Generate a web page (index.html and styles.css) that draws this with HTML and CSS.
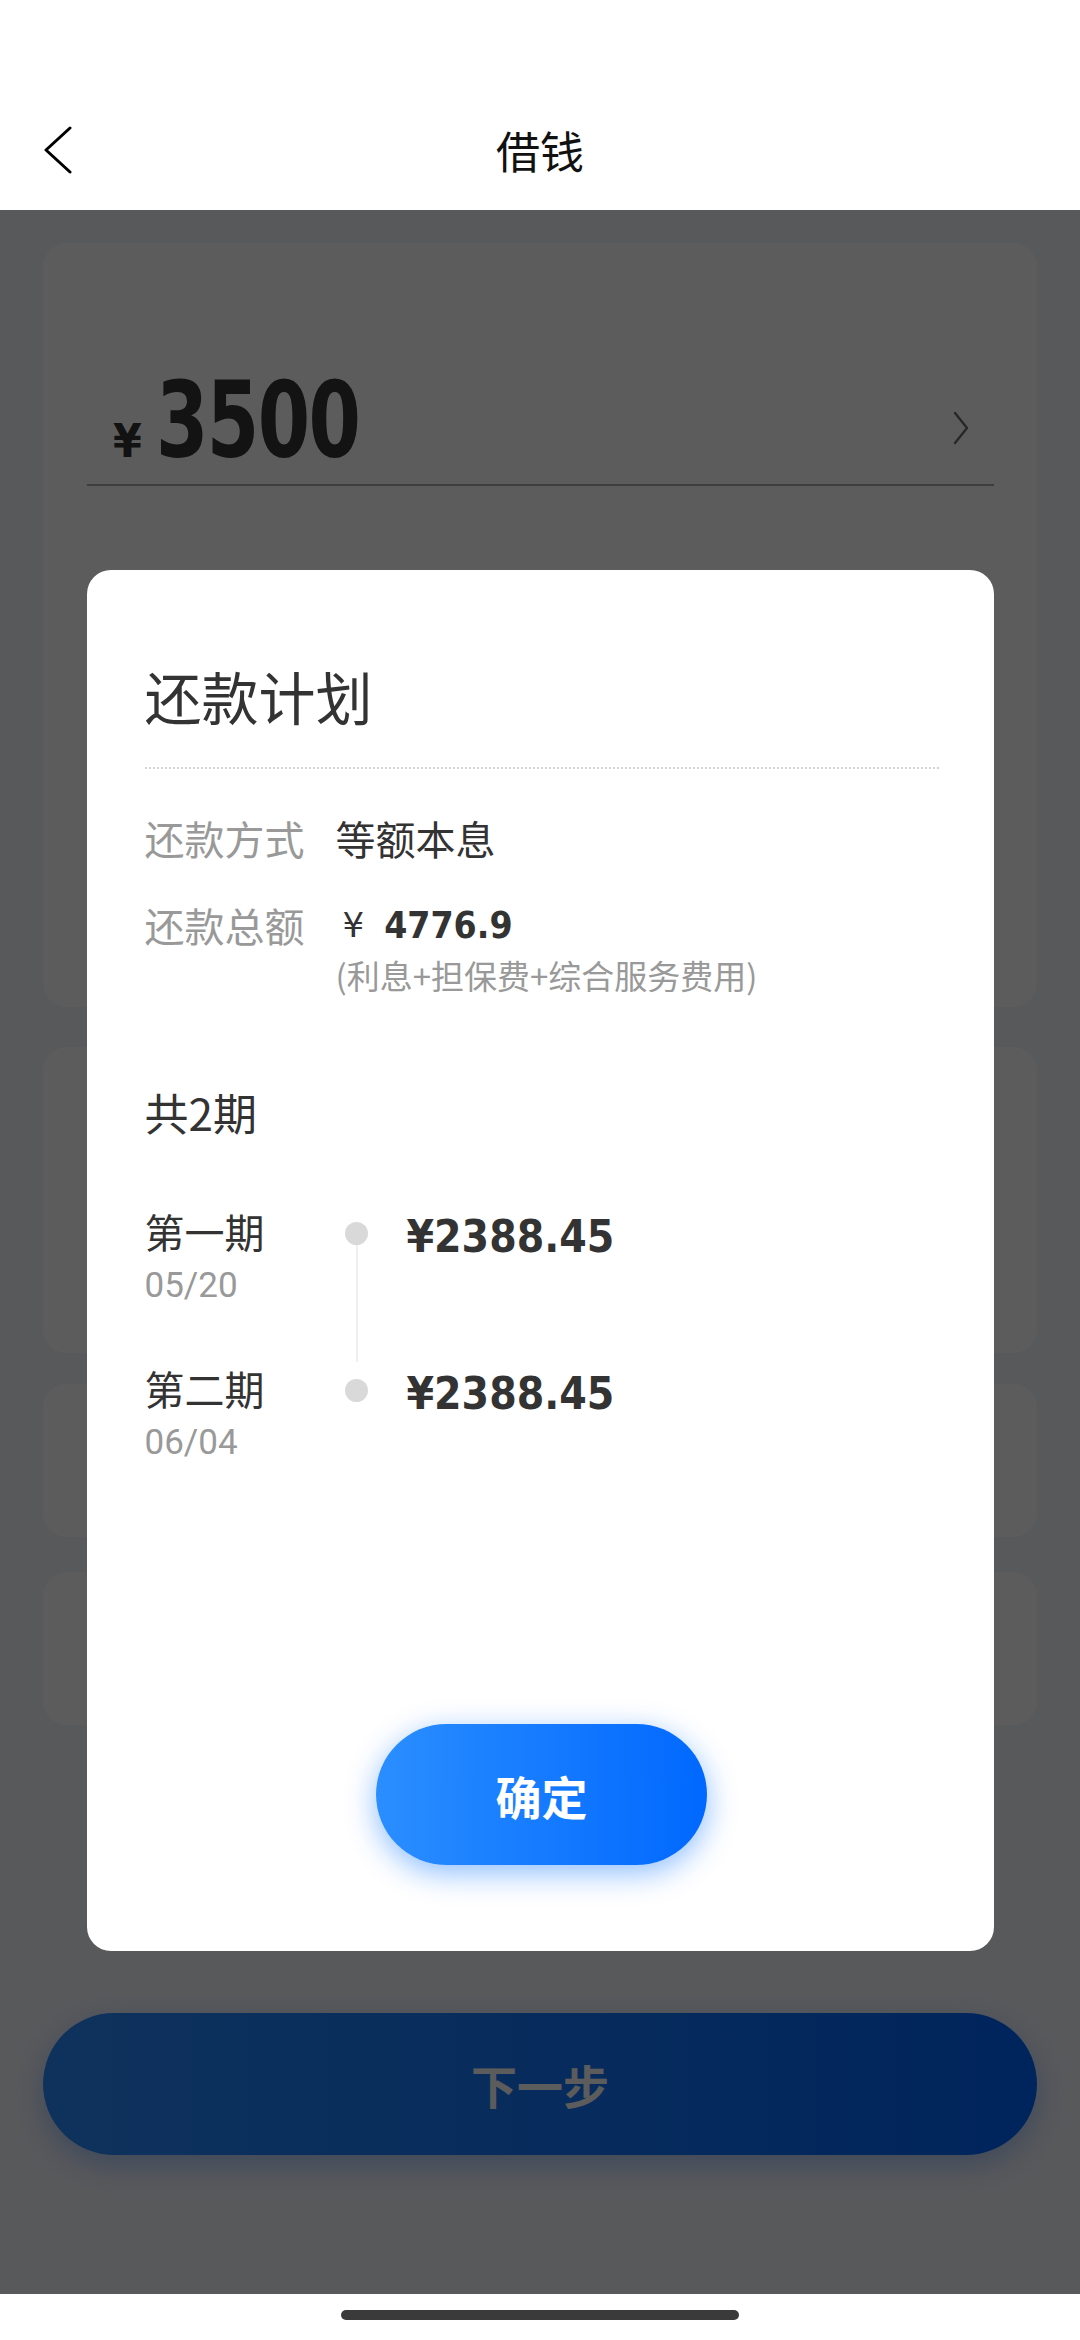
FILE: index.html
```html
<!DOCTYPE html>
<html lang="zh-CN">
<head>
<meta charset="utf-8">
<title>借钱</title>
<link rel="stylesheet" href="styles.css">
</head>
<body>
<div class="screen">
  <header class="topbar">
    <div class="status"></div>
    <div class="nav">
      <div class="nav-left">
        <svg class="back" width="30" height="50" viewBox="0 0 30 50"><path d="M26 3 L2 25 L26 47" fill="none" stroke="#000" stroke-width="3" stroke-linecap="round" stroke-linejoin="round"/></svg>
      </div>
      <div class="title">借钱</div>
      <div></div>
    </div>
  </header>
  <main class="page">
    <section class="card card-amount">
      <div class="amount-row">
        <span class="yen">¥</span><span class="amount">3500</span>
        <svg class="more" width="18" height="34" viewBox="0 0 18 34"><path d="M3 2 L15 17 L3 32" fill="none" stroke="#6f6f6f" stroke-width="2.4" stroke-linecap="round" stroke-linejoin="round"/></svg>
      </div>
    </section>
    <section class="card card-b"></section>
    <section class="card card-c"></section>
    <section class="card card-d"></section>
    <button class="next">下一步</button>

    <div class="mask">
      <div class="dialog">
        <h2 class="d-title">还款计划</h2>
        <div class="info-row first">
          <span class="label">还款方式</span>
          <span class="value">等额本息</span>
        </div>
        <div class="info-row">
          <span class="label">还款总额</span>
          <div class="value-col">
            <div class="total"><span class="t-yen">¥</span><span class="t-num">4776.9</span></div>
            <div class="sub">(利息+担保费+综合服务费用)</div>
          </div>
        </div>
        <div class="count">共2期</div>
        <div class="periods">
          <div class="period">
            <div class="p-left">
              <div class="p-name">第一期</div>
              <div class="p-date">05/20</div>
            </div>
            <div class="p-track"><span class="dot"></span><span class="line"></span></div>
            <div class="p-amt">¥2388.45</div>
          </div>
          <div class="period last">
            <div class="p-left">
              <div class="p-name">第二期</div>
              <div class="p-date">06/04</div>
            </div>
            <div class="p-track"><span class="dot"></span></div>
            <div class="p-amt">¥2388.45</div>
          </div>
        </div>
        <button class="ok">确定</button>
      </div>
    </div>
  </main>
  <footer class="homebar"><span class="indicator"></span></footer>
</div>
</body>
</html>
```

FILE: styles.css
```css
* { box-sizing: border-box; }
html, body { margin: 0; padding: 0; background: #fff; }
body { font-family: "Noto Sans CJK SC", "Noto Sans", sans-serif; }

.screen {
  width: 1080px;
  height: 2340px;
  overflow: hidden;
  display: flex;
  flex-direction: column;
}

.topbar { background: #fff; height: 210px; flex: none; }
.status { height: 90px; }
.nav {
  height: 120px;
  display: grid;
  grid-template-columns: 1fr auto 1fr;
  align-items: center;
}
.nav-left { padding-left: 44px; display: flex; align-items: center; }
.back { display: block; }
.title {
  font-size: 44px;
  line-height: 60px;
  color: #111;
  font-weight: 400;
}

.page {
  position: relative;
  height: 2084px;
  flex: none;
  background: #f4f6fc;
  padding: 33px 43px 0;
  display: flex;
  flex-direction: column;
}
.card { background: #fff; border-radius: 24px; flex: none; }
.card-amount { height: 764px; padding: 0 43px 0 44px; }
.card-b { height: 306px; margin-top: 40px; }
.card-c { height: 153px; margin-top: 31px; }
.card-d { height: 153px; margin-top: 35px; }

.amount-row {
  margin-top: 123px;
  display: flex;
  align-items: baseline;
  padding: 0 24px 8px 26px;
  border-bottom: 2px solid #a9a9a9;
}
.yen {
  font-family: "DejaVu Sans Condensed", "DejaVu Sans", sans-serif;
  font-stretch: condensed;
  font-weight: 700;
  font-size: 46px;
  color: #333;
  margin-right: 14px;
}
.amount {
  display: inline-block;
  font-family: "DejaVu Sans Condensed", "DejaVu Sans", sans-serif;
  font-stretch: condensed;
  font-weight: 700;
  font-size: 106px;
  line-height: 110px;
  color: #353535;
  letter-spacing: -2px;
  transform: scaleX(0.79);
  transform-origin: left bottom;
}
.more { margin-left: auto; align-self: flex-end; margin-bottom: 31px; }

.next {
  margin-top: 288px;
  height: 142px;
  border: 0;
  border-radius: 71px;
  background: linear-gradient(90deg, #2a8cff, #0066ff);
  box-shadow: 0 10px 30px rgba(0, 100, 255, 0.3);
  color: #fff;
  font-family: "Noto Sans CJK SC", sans-serif;
  font-weight: 700;
  font-size: 46px;
  flex: none;
}

.mask {
  position: absolute;
  inset: 0;
  background: rgba(0, 0, 0, 0.64);
  display: flex;
  justify-content: center;
  align-items: flex-start;
  padding-top: 360px;
}
.dialog {
  width: 907px;
  height: 1381px;
  background: #fff;
  border-radius: 24px;
  padding: 92px 55px 86px 58px;
  display: flex;
  flex-direction: column;
}
.d-title {
  margin: 0;
  font-size: 57px;
  line-height: 67px;
  font-weight: 400;
  color: #333;
  padding-bottom: 38px;
  border-bottom: 2px dotted #d4d4d4;
}
.info-row {
  display: grid;
  grid-template-columns: 191px 1fr;
  margin-top: 31px;
}
.info-row.first { margin-top: 41px; }
.label { font-size: 40px; line-height: 56px; color: #999; }
.value { font-size: 40px; line-height: 56px; color: #333; }
.total { height: 56px; display: flex; align-items: center; padding-left: 7px; }
.t-yen {
  font-family: "DejaVu Sans", sans-serif;
  font-size: 34px;
  color: #333;
  margin-right: 20px;
}
.t-num {
  font-family: "DejaVu Sans Condensed", "DejaVu Sans", sans-serif;
  font-stretch: condensed;
  font-weight: 700;
  font-size: 37px;
  letter-spacing: 0;
  color: #333;
}
.sub { font-size: 33px; line-height: 44px; color: #999; }

.count {
  margin-top: 86px;
  font-size: 44px;
  line-height: 58px;
  color: #333;
}
.periods { margin-top: 64px; }
.period {
  display: grid;
  grid-template-columns: 189px 46px 1fr;
}
.p-left { padding-bottom: 53px; }
.period.last .p-left { padding-bottom: 0; }
.p-name { font-size: 40px; line-height: 52px; color: #333; }
.p-date {
  margin-top: 6px;
  font-family: Roboto, sans-serif;
  font-size: 35px;
  line-height: 46px;
  color: #999;
}
.p-track { display: flex; flex-direction: column; align-items: center; }
.dot {
  width: 23px;
  height: 23px;
  border-radius: 50%;
  background: #d9d9d9;
  margin-top: 17px;
  flex: none;
}
.line { width: 2px; flex: 1; background: #efefef; }
.p-amt {
  padding-left: 27px;
  margin-top: 4px;
  font-family: "DejaVu Sans Condensed", "DejaVu Sans", sans-serif;
  font-stretch: condensed;
  font-weight: 700;
  font-size: 44px;
  line-height: 56px;
  color: #333;
}

.ok {
  margin-top: auto;
  align-self: center;
  width: 331px;
  height: 141px;
  border: 0;
  border-radius: 71px;
  background: linear-gradient(90deg, #2b8eff, #0068ff);
  box-shadow: 0 8px 30px rgba(0, 110, 255, 0.45);
  color: #fff;
  font-family: "Noto Sans CJK SC", sans-serif;
  font-weight: 700;
  font-size: 46px;
}

.homebar {
  height: 46px;
  flex: none;
  background: #fff;
  display: flex;
  justify-content: center;
}
.indicator {
  margin-top: 16px;
  width: 398px;
  height: 10px;
  border-radius: 5px;
  background: #3a3a3a;
}
```
